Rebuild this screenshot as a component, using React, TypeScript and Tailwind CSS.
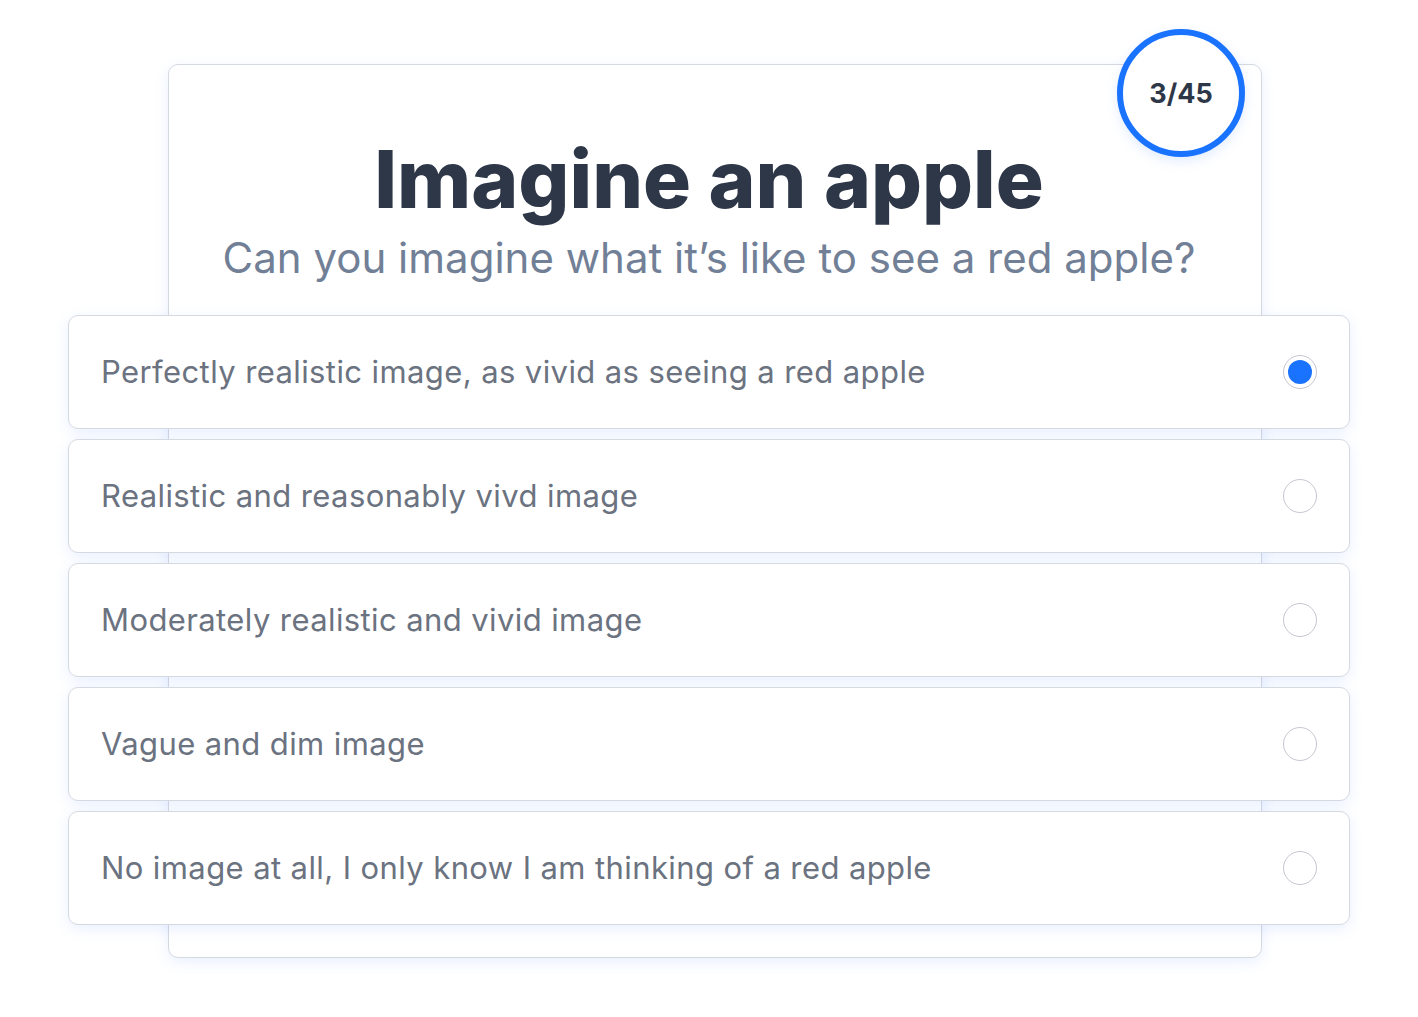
import React from "react";

const options = [
  "Perfectly realistic image, as vivid as seeing a red apple",
  "Realistic and reasonably vivd image",
  "Moderately realistic and vivid image",
  "Vague and dim image",
  "No image at all, I only know I am thinking of a red apple",
];

export default function App() {
  const selected = 0;
  return (
    <div className="min-h-screen bg-white" style={{ fontFamily: "Inter, 'Noto Sans', sans-serif" }}>
      <div className="w-[1282px] mx-auto pt-[64px]">
        <div className="relative ml-[100px] w-[1094px] rounded-[10px] border border-[#d5d9e0] bg-white shadow-[0_4px_14px_rgba(96,150,255,0.14)] pb-[32px]">
          <div className="absolute right-[16px] top-[-36px] w-[128px] h-[128px] rounded-full border-[6px] border-[#1a73ff] bg-white flex items-center justify-center shadow-[0_4px_12px_rgba(96,150,255,0.18)]">
            <span className="text-[27px] font-bold text-[#2d3748] leading-none">3/45</span>
          </div>
          <div className="pt-[74px] pb-[32px] pr-[12px] flex flex-col items-center">
            <h1 className="text-[80px] font-extrabold leading-[1] text-[#2d3748]">Imagine an apple</h1>
            <p className="mt-[14px] text-[42px] leading-[1.2] text-[#718096]">Can you imagine what it’s like to see a red apple?</p>
          </div>
          <div className="ml-[-101px] mr-[-89px] flex flex-col gap-[10px]">
            {options.map((o, i) => (
              <div
                key={i}
                className="h-[114px] rounded-[10px] border border-[#d5d9e0] bg-white shadow-[0_4px_14px_rgba(96,150,255,0.14)] flex items-center justify-between pl-[32px] pr-[32px]"
              >
                <span className="text-[31px] tracking-[0.4px] text-[#6b7280]">{o}</span>
                <span className="w-[34px] h-[34px] rounded-full border border-[#c4c8cf] bg-white flex items-center justify-center">
                  {i === selected && <span className="w-[24px] h-[24px] rounded-full bg-[#1a73ff]" />}
                </span>
              </div>
            ))}
          </div>
        </div>
      </div>
    </div>
  );
}
